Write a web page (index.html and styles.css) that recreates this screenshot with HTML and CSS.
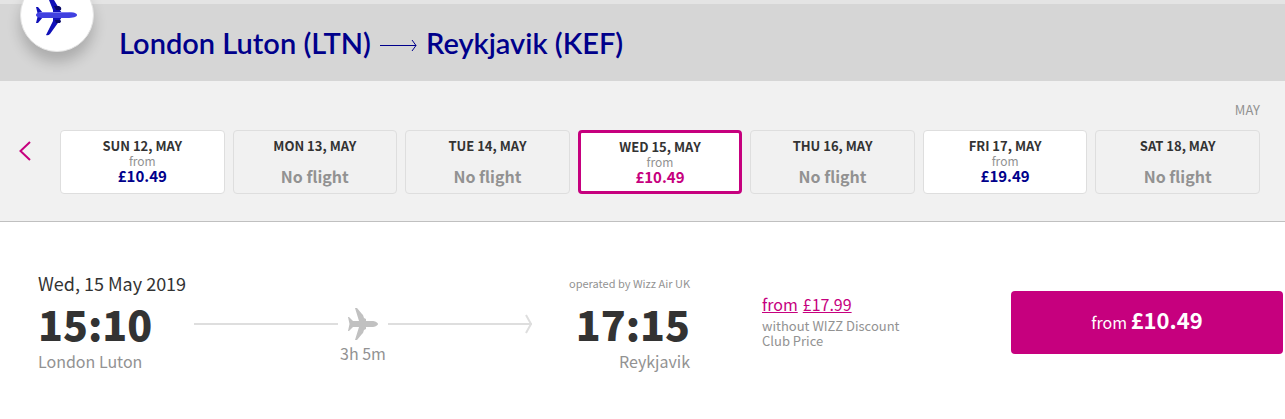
FILE: index.html
```html
<!DOCTYPE html>
<html lang="en">
<head>
    <meta charset="UTF-8">
    <meta name="viewport" content="width=device-width, initial-scale=1.0">
    <title>Select flight</title>
    <link rel="stylesheet" href="styles.css">
</head>
<body>
    <header class="route">
        <div class="route-badge">
            <svg width="42" height="42" viewBox="0 0 42 42" aria-hidden="true">
                <path d="M11 1h4l9 15 3 5-3 5-10 14q-2 2-4 1l7-14V16z" fill="#1010b8"/>
                <path d="M0 13h2l5 6v4l-5 6H0l2-8z" fill="#1010b8"/>
                <path d="M18 12h5q3 1 2 4h-5zM20 29h4q2-2 0-3h-5z" fill="#080868"/>
                <path d="M0 21c0-2 3-3 7-3h24c6 0 10 1 10 3s-4 3-10 3H7c-4 0-7-1-7-3z" fill="#4040e0"/>
                <path d="M2 19c2-1 4-1 6-1h24c3 0 5 1 7 1z" fill="#7c7cf2"/>
            </svg>
        </div>
        <h1 class="route-title">
            <span>London Luton (LTN)</span>
            <svg class="route-arrow" width="37" height="12" viewBox="0 0 37 12" aria-hidden="true">
                <path d="M0 6.5h36M32 1l4 5.500-4 5.500" fill="none" stroke="#00008b"/>
            </svg>
            <span>Reykjavik (KEF)</span>
        </h1>
    </header>

    <section class="calendar">
        <div class="month">MAY</div>
        <div class="calendar-row">
            <button type="button" class="prev" aria-label="Previous days">
                <svg width="12" height="20" viewBox="0 0 12 20" aria-hidden="true">
                    <path d="M11 1l-9.500 9 9.500 9" fill="none" stroke="#c6007e" stroke-width="2"/>
                </svg>
            </button>
            <div class="days">
                <button type="button" class="day">
                    <span class="day-date">SUN 12, MAY</span>
                    <span class="day-from">from</span>
                    <span class="day-price">£10.49</span>
                </button>
                <button type="button" class="day" disabled>
                    <span class="day-date">MON 13, MAY</span>
                    <span class="day-none">No flight</span>
                </button>
                <button type="button" class="day" disabled>
                    <span class="day-date">TUE 14, MAY</span>
                    <span class="day-none">No flight</span>
                </button>
                <button type="button" class="day selected">
                    <span class="day-date">WED 15, MAY</span>
                    <span class="day-from">from</span>
                    <span class="day-price">£10.49</span>
                </button>
                <button type="button" class="day" disabled>
                    <span class="day-date">THU 16, MAY</span>
                    <span class="day-none">No flight</span>
                </button>
                <button type="button" class="day">
                    <span class="day-date">FRI 17, MAY</span>
                    <span class="day-from">from</span>
                    <span class="day-price">£19.49</span>
                </button>
                <button type="button" class="day" disabled>
                    <span class="day-date">SAT 18, MAY</span>
                    <span class="day-none">No flight</span>
                </button>
            </div>
        </div>
    </section>

    <main class="flight">
        <div class="journey">
            <div class="stop">
                <div class="stop-date">Wed, 15 May 2019</div>
                <div class="stop-time">15:10</div>
                <div class="stop-place">London Luton</div>
            </div>
            <div class="track">
                <div class="track-line">
                    <span class="line"></span>
                    <svg width="32" height="32" viewBox="0 0 32 32" aria-hidden="true">
                        <path d="M8 0h2l5 6 1 1 1 3 2 1v2h6c3 0 6 1.500 6 3s-3 3-6 3h-6v2l-2 1-1 3-1 1-5 6H8l4-13H6l-4 4H1l1.500-7L1 9h1l4 4h6z" fill="#c1c1c1"/>
                    </svg>
                    <span class="line line-end">
                        <svg width="8" height="20" viewBox="0 0 8 20" aria-hidden="true">
                            <path d="M2 1l5 9-5 9" fill="none" stroke="#dedede" stroke-width="2"/>
                        </svg>
                    </span>
                </div>
                <div class="duration">3h 5m</div>
            </div>
            <div class="stop arrival">
                <div class="operator">operated by Wizz Air UK</div>
                <div class="stop-time">17:15</div>
                <div class="stop-place">Reykjavik</div>
            </div>
        </div>

        <div class="regular">
            <a href="#" class="regular-price"><span>from</span> <span>£17.99</span></a>
            <div class="regular-note">without WIZZ Discount Club Price</div>
        </div>

        <button type="button" class="buy">from <strong>£10.49</strong></button>
    </main>
</body>
</html>
```

FILE: styles.css
```css
* {
    box-sizing: border-box;
}

body {
    margin: 0;
    background-color: #fff;
    color: #333;
    font-family: "Noto Sans CJK SC", "Open Sans", sans-serif;
}

button {
    font-family: inherit;
    cursor: pointer;
}

/* Route header */
.route {
    position: relative;
    display: flex;
    align-items: center;
    min-height: 81px;
    padding-left: 119px;
    border-top: 4px solid #e4e4e4;
    background-color: #d6d6d6;
}

.route-badge {
    position: absolute;
    top: -26px;
    left: 20px;
    display: flex;
    align-items: center;
    justify-content: center;
    width: 74px;
    height: 74px;
    border: 1px solid #e4e4e4;
    border-radius: 50%;
    background-color: #fff;
    box-shadow: 0 10px 14px rgba(0, 0, 0, 0.2);
}

.route-title {
    display: flex;
    align-items: center;
    gap: 9px;
    margin: 0;
    color: #00008b;
    font-family: Lato, sans-serif;
    font-size: 29px;
    font-weight: 600;
    line-height: 36px;
}

.route-arrow {
    margin-top: 4px;
}

/* Day picker */
.calendar {
    padding: 19px 25px 27px 13px;
    border-bottom: 1px solid #c0c0c0;
    background-color: #f1f1f1;
}

.month {
    margin-bottom: 10px;
    color: #929292;
    font-size: 13px;
    line-height: 20px;
    text-align: right;
}

.calendar-row {
    display: flex;
    gap: 23px;
}

.prev {
    display: flex;
    align-items: center;
    justify-content: center;
    width: 24px;
    margin-top: -22px;
    padding: 0;
    border: 0;
    background: none;
}

.days {
    display: grid;
    flex: 1;
    grid-template-columns: repeat(7, 1fr);
    gap: 8px;
}

.day {
    display: flex;
    flex-direction: column;
    align-items: center;
    min-height: 64px;
    padding: 7px 0 0;
    border: 1px solid #dedede;
    border-radius: 4px;
    background-color: #fff;
    color: #333;
}

.day:disabled {
    background-color: transparent;
    cursor: default;
}

.day-date {
    font-size: 13px;
    font-weight: 700;
    line-height: 16px;
}

.day-from {
    color: #929292;
    font-size: 12px;
    line-height: 13px;
}

.day-price {
    color: #00008b;
    font-size: 15px;
    font-weight: 700;
    line-height: 18px;
}

.day-none {
    margin-top: 12px;
    color: #929292;
    font-size: 16px;
    font-weight: 700;
    line-height: 20px;
}

.selected {
    padding-top: 6px;
    border: 3px solid #c6007e;
}

.selected .day-price {
    color: #c6007e;
}

/* Flight row */
.flight {
    display: grid;
    grid-template-columns: 652fr 177fr 272fr;
    gap: 72px;
    padding: 49px 2px 46px 38px;
}

.journey {
    display: grid;
    grid-template-columns: 156fr 338fr 158fr;
}

.stop {
    white-space: nowrap;
}

.arrival {
    text-align: right;
}

.stop-date,
.operator {
    font-size: 18px;
    line-height: 24px;
}

.operator {
    color: #929292;
    font-size: 11px;
}

.stop-time {
    font-size: 41px;
    font-weight: 900;
    line-height: 56px;
}

.stop-place,
.duration {
    color: #929292;
    font-size: 16px;
    line-height: 20px;
}

.track {
    padding-top: 37px;
    text-align: center;
}

.track-line {
    display: flex;
    align-items: center;
    gap: 9px;
    margin-bottom: 3px;
}

.line {
    flex: 1;
    height: 2px;
    background-color: #dedede;
}

.line-end {
    display: flex;
    align-items: center;
    justify-content: flex-end;
}

.line-end svg {
    flex: none;
}

.regular {
    max-width: 150px;
    padding-top: 21px;
}

.regular-price {
    display: flex;
    gap: 5px;
    margin-bottom: 2px;
    color: #c6007e;
    font-size: 16px;
    line-height: 24px;
}

.regular-note {
    color: #929292;
    font-size: 13px;
    line-height: 15px;
}

.buy {
    height: 63px;
    margin-top: 20px;
    padding: 0 0 8px;
    border: 0;
    border-radius: 4px;
    background-color: #c6007e;
    color: #fff;
    font-size: 16px;
}

.buy strong {
    font-size: 22px;
    font-weight: 700;
}
```
